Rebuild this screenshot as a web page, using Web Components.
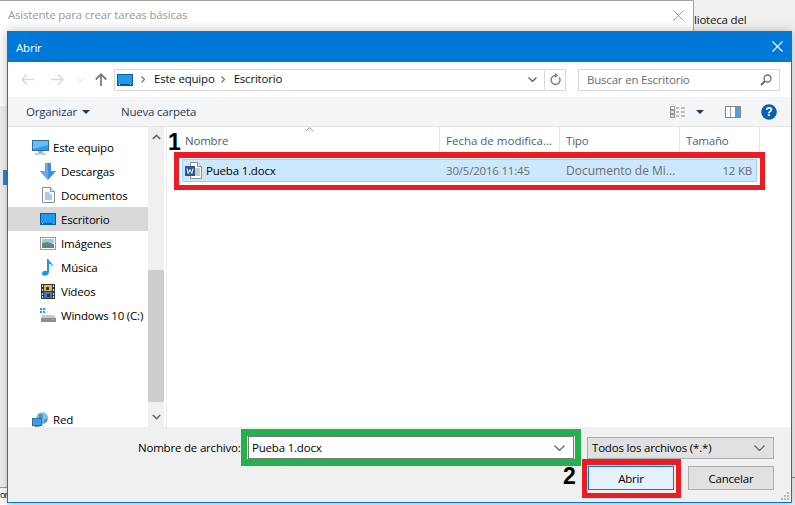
<!DOCTYPE html>
<html>
<head>
<meta charset="utf-8">
<title>Abrir</title>
<style>
  html, body { margin: 0; height: 100%; overflow: hidden; }
  body { background: #f0f0f0; font: 11.5px "Open Sans", "Noto Sans", sans-serif; letter-spacing: -.2px; color: #000; }
</style>
</head>
<body>
<desk-stage>
  <back-window></back-window>
  <file-dialog></file-dialog>
  <mark-box style="left:174px;top:152px;width:591px;height:38px;--c:#ed1c24"></mark-box>
  <mark-box style="left:241px;top:429px;width:340px;height:37px;--c:#22b14c;--w:7px 6px"></mark-box>
  <mark-box style="left:582px;top:459px;width:99px;height:39px;--c:#ed1c24"></mark-box>
  <mark-num style="left:168px;top:127px">1</mark-num>
  <mark-num style="left:563px;top:461px">2</mark-num>
</desk-stage>
<script>
const ICONS = {
  pc: `<svg width="17" height="15" viewBox="0 0 17 15"><rect x=".5" y=".5" width="16" height="10" fill="#2b9af3" stroke="#35708f"/><path d="M1 1h15v4L1 9z" fill="#66bdf8"/><rect x="6" y="11" width="5" height="2" fill="#9db4c0"/><rect x="3" y="13" width="11" height="2" fill="#c4d0d6"/></svg>`,
  down: `<svg width="16" height="17" viewBox="0 0 16 17"><path d="M5 0h6v8h5l-8 9-8-9h5z" fill="#3d8fdc"/><path d="M5 0h3v17L0 8h5z" fill="#62a9ea"/></svg>`,
  doc: `<svg width="13" height="16" viewBox="0 0 13 16"><path d="M.5.5h8l4 4v11H.5z" fill="#fff" stroke="#8f8f8f"/><path d="M8.5.5v4h4" fill="#ececec" stroke="#8f8f8f"/><path d="M3 6h4M3 8h7M3 10h7M3 12h7" stroke="#4a9ad8"/></svg>`,
  desk: `<svg width="16" height="12" viewBox="0 0 16 12"><rect x=".5" y=".5" width="15" height="11" fill="#1e9bf0" stroke="#0d5f99"/><rect x="1" y="10" width="14" height="1" fill="#0a4f85"/><rect x="2" y="10" width="1" height="1" fill="#fff"/><rect x="13" y="10" width="1" height="1" fill="#fff"/></svg>`,
  img: `<svg width="16" height="13" viewBox="0 0 16 13"><rect x=".5" y=".5" width="15" height="12" fill="#fff" stroke="#9a9a9a"/><rect x="2" y="2" width="12" height="4" fill="#9cc8e6"/><path d="M2 6l5-1 7 2v4H2z" fill="#5b8a72"/></svg>`,
  music: `<svg width="12" height="17" viewBox="0 0 12 17"><path d="M5 0h1.500c.4 3 5 4 4.500 8-.8-2-2.500-3-4-3.300V13c0 2.400-2 3.800-4.200 3.800C1 16.800 0 15.800 0 14.500 0 12.600 2.600 11.200 5 12z" fill="#1c97ea"/></svg>`,
  video: `<svg width="14" height="15" viewBox="0 0 14 15"><rect width="14" height="15" fill="#2e3640"/><rect x="3" y="1" width="8" height="6" fill="#e0b93c"/><rect x="3" y="8" width="8" height="6" fill="#3f78c0"/><path d="M5 3h3v3H5zM6 10h3v3H6z" fill="#333"/><path d="M1 1h1v2H1zM1 5h1v2H1zM1 9h1v2H1zM1 12h1v2H1zM12 1h1v2h-1zM12 5h1v2h-1zM12 9h1v2h-1zM12 12h1v2h-1z" fill="#ddd"/></svg>`,
  drive: `<svg width="16" height="14" viewBox="0 0 16 14"><path d="M0 0h2v2H0zM3 0h2v2H3zM0 3h2v2H0zM3 3h2v2H3z" fill="#1ba1e2"/><path d="M2 7h12l2 3v4H1v-4z" fill="#c9c9c9"/><rect x="1" y="10" width="15" height="4" fill="#8d8d8d"/><rect x="12" y="11" width="2" height="1" fill="#6fe06f"/></svg>`,
  net: `<svg width="17" height="15" viewBox="0 0 20 17"><circle cx="12" cy="7" r="7" fill="#7fc0e8"/><path d="M8 2c3-1 5 1 5 3s-3 3-5 2zM14 9l4-2c0 3-2 5-4 6z" fill="#4b8fb8"/><rect x=".5" y="7.500" width="11" height="8" fill="#3f9ee0" stroke="#1e5f8f"/><rect x="3" y="15" width="6" height="2" fill="#2a6f9f"/></svg>`
};
const CHEV_DOWN = `<svg width="11" height="6" viewBox="0 0 11 6"><path d="M.5.5l5 5 5-5" fill="none" stroke="#606060" stroke-width="1.200"/></svg>`;

function el(tag, css, html) {
  customElements.define(tag, class extends HTMLElement {
    constructor() {
      super();
      this.attachShadow({ mode: 'open' }).innerHTML = `<style>${css}</style>${html}`;
    }
  });
}

el('desk-stage', `:host { display: block; position: relative; width: 795px; height: 505px; overflow: hidden; }
  .tab { top: 170px; height: 15px; width: 4px; left: 3px; background: #2f86d0; position: absolute; }
  .dot { position: absolute; left: 5px; top: 43px; width: 2px; height: 2px; background: #e8a33d; }
  .low { position: absolute; left: 0; top: 487px; width: 7px; height: 18px; background: #fff; border-top: 1px solid #a0a0a0; box-sizing: border-box; font-size: 9px; letter-spacing: -1px; line-height: 13px; white-space: nowrap; }
  .lib { position: absolute; left: 694px; top: 12px; white-space: nowrap; color: #111; }
  .r { position: absolute; left: 792px; top: 477px; width: 3px; height: 1px; background: #888; }`,
  `<div class="lib">lioteca del</div><div class="tab"></div><div class="dot"></div><div class="low">or</div><div class="r"></div><slot></slot>`);

el('back-window', `:host { position: absolute; left: 0; top: 0; width: 694px; height: 106px; background: #fff; border-top: 1px solid #a3a3a3; border-right: 1px solid #a3a3a3; box-sizing: border-box; display: flex; justify-content: space-between; align-items: flex-start; padding: 6px 9px 0 8px; color: #9a9a9a; }
  svg { margin-top: 3px; }`,
  `<span>Asistente para crear tareas básicas</span><svg width="11" height="11" viewBox="0 0 11 11"><path d="M.5.500l10 10M10.500.500l-10 10" stroke="#9a9a9a" fill="none"/></svg>`);

el('file-dialog', `:host { position: absolute; left: 7px; top: 31px; width: 785px; height: 472px; box-sizing: border-box; border: 1px solid #0078d7; border-top: 0; background: #f0f0f0; display: flex; flex-direction: column; box-shadow: 0 0 10px rgba(0,0,0,.25); }
  .mid { display: flex; height: 300px; background: #fff; flex: none; }`,
  `<title-bar></title-bar><address-bar></address-bar><tool-bar></tool-bar>
   <div class="mid"><nav-pane></nav-pane><file-list></file-list></div>
   <open-footer></open-footer>`);

el('title-bar', `:host { display: flex; flex: none; height: 31px; background: #0078d7; color: #fff; align-items: center; justify-content: space-between; padding: 0 8px; }
  span { padding-top: 2px; }
  svg { display: block; }`,
  `<span>Abrir</span><svg width="11" height="11" viewBox="0 0 11 11"><path d="M.5.500l10 10M10.500.500l-10 10" stroke="#fff" stroke-width="1.100" fill="none"/></svg>`);

el('address-bar', `:host { display: flex; flex: none; height: 35px; background: #fff; align-items: center; box-sizing: border-box; padding: 0 11px 0 13px; }
  svg { display: block; flex: none; }
  .nav { display: flex; align-items: center; width: 93px; flex: none; }
  .box { height: 22px; box-sizing: border-box; border: 1px solid #d9d9d9; display: flex; align-items: center; background: #fff; flex: none; }
  .path { width: 452px; padding-left: 2px; }
  .path span { color: #111; margin-top: -2px; }
  .sep { margin: 0 9px 0 8px; }
  .sep2 { margin: 0 9px 0 6px; }
  .ctl { margin-left: auto; display: flex; align-items: center; height: 100%; }
  .rf { width: 20px; height: 100%; border-left: 1px solid #d9d9d9; display: flex; align-items: center; justify-content: center; margin-left: 7px; }
  .find { width: 202px; margin-left: 12px; padding: 0 7px 0 8px; justify-content: space-between; color: #6d6d6d; }`,
  `<div class="nav">
     <svg width="13" height="11" viewBox="0 0 13 11" style="margin-right:17px"><path d="M6 .5L1 5.500l5 5M1 5.500h12" fill="none" stroke="#d8d8d8" stroke-width="1.500"/></svg>
     <svg width="13" height="11" viewBox="0 0 13 11" style="margin-right:13px"><path d="M7 .5l5 5-5 5M12 5.500H0" fill="none" stroke="#d8d8d8" stroke-width="1.500"/></svg>
     <svg width="7" height="4" viewBox="0 0 7 4" style="margin-right:11px"><path d="M.5.500l3 3 3-3" fill="none" stroke="#d8d8d8"/></svg>
     <svg width="12" height="13" viewBox="0 0 12 13"><path d="M6 13V1.500M.8 6.500L6 1.200l5.200 5.300" fill="none" stroke="#7a7a7a" stroke-width="1.800"/></svg>
   </div>
   <div class="box path">
     ${ICONS.desk}
     <svg class="sep" width="4" height="7" viewBox="0 0 4 7"><path d="M.5.500l3 3-3 3" fill="none" stroke="#707070" stroke-width="1.200"/></svg>
     <span>Este equipo</span>
     <svg class="sep2" width="4" height="7" viewBox="0 0 4 7"><path d="M.5.500l3 3-3 3" fill="none" stroke="#707070" stroke-width="1.200"/></svg>
     <span>Escritorio</span>
     <div class="ctl">
       <svg width="9" height="5" viewBox="0 0 9 5"><path d="M.5.500l4 4 4-4" fill="none" stroke="#606060" stroke-width="1.300"/></svg>
       <div class="rf"><svg width="11" height="13" viewBox="0 0 11 13"><path d="M9.300 4.500A4.500 4.500 0 1 1 5.500 2.500" fill="none" stroke="#7a7a7a" stroke-width="1.400"/><path d="M5 0l3 2.500L5 5z" fill="#7a7a7a"/></svg></div>
     </div>
   </div>
   <div class="box find"><span>Buscar en Escritorio</span>
     <svg width="12" height="12" viewBox="0 0 12 12"><circle cx="7.500" cy="4.500" r="3.500" fill="none" stroke="#6f6f6f" stroke-width="1.300"/><path d="M5 7L1 11" stroke="#6f6f6f" stroke-width="2"/></svg>
   </div>`);

el('tool-bar', `:host { display: flex; flex: none; height: 30px; background: #f4f5f7; border-bottom: 1px solid #e4e4e4; box-sizing: border-box; align-items: center; padding: 0 14px 0 18px; color: #1e3a5c; }
  svg { display: block; flex: none; }
  .org { display: flex; align-items: center; gap: 5px; margin-right: 31px; }
  .right { margin-left: auto; display: flex; align-items: center; }`,
  `<div class="org">Organizar <svg width="8" height="4" viewBox="0 0 8 4"><path d="M0 0h8L4 4z" fill="#1e3a5c"/></svg></div>
   <span>Nueva carpeta</span>
   <div class="right">
     <svg width="16" height="12" viewBox="0 0 16 12" style="margin-right:10px"><rect x=".5" y=".5" width="4" height="3" fill="#fff" stroke="#9a9a9a"/><rect x=".5" y="4.500" width="4" height="3" fill="#cfe4f7" stroke="#9a9a9a"/><rect x=".5" y="8.500" width="4" height="3" fill="#f3c9c9" stroke="#9a9a9a"/><path d="M6 2h3M11 2h4M6 6h3M11 6h4M6 10h3M11 10h4" stroke="#8a8a8a"/></svg>
     <svg width="8" height="4" viewBox="0 0 8 4" style="margin-right:21px"><path d="M0 0h8L4 4z" fill="#1e3a5c"/></svg>
     <svg width="16" height="12" viewBox="0 0 16 12" style="margin-right:20px"><rect x=".5" y=".5" width="15" height="11" fill="#fff" stroke="#8a8a8a"/><rect x="10" y="1" width="5" height="10" fill="#4d9fe0"/><path d="M5.500 1v10" stroke="#9a9a9a"/></svg>
     <svg width="16" height="16" viewBox="0 0 17 17"><circle cx="8.500" cy="8.500" r="8.300" fill="#0b5fb0"/><text x="8.500" y="13.200" text-anchor="middle" font-family="Liberation Sans" font-weight="700" font-size="13" fill="#fff">?</text></svg>
   </div>`);

el('nav-pane', `:host { display: flex; flex: none; width: 158px; }
  .items { width: 140px; flex: none; display: flex; flex-direction: column; padding-top: 8px; box-sizing: border-box; }
  .bar { width: 16px; flex: none; background: #f0f0f0; display: flex; flex-direction: column; align-items: center; }
  .bar svg { display: block; flex: none; margin: 7px 0; }
  .track { flex: 1; width: 100%; padding-top: 123px; box-sizing: border-box; }
  .thumb { background: #cdcdcd; height: 132px; }
  .net { margin-top: auto; margin-bottom: -4px; }
  .edge { width: 2px; flex: none; background: #fff; }`,
  `<div class="items">
     <nav-item top><span slot="i">${ICONS.pc}</span>Este equipo</nav-item>
     <nav-item><span slot="i">${ICONS.down}</span>Descargas</nav-item>
     <nav-item><span slot="i">${ICONS.doc}</span>Documentos</nav-item>
     <nav-item sel><span slot="i">${ICONS.desk}</span>Escritorio</nav-item>
     <nav-item><span slot="i">${ICONS.img}</span>Imágenes</nav-item>
     <nav-item><span slot="i">${ICONS.music}</span>Música</nav-item>
     <nav-item><span slot="i">${ICONS.video}</span>Vídeos</nav-item>
     <nav-item><span slot="i">${ICONS.drive}</span>Windows 10 (C:)</nav-item>
     <nav-item top class="net"><span slot="i">${ICONS.net}</span>Red</nav-item>
   </div>
   <div class="bar">
     <svg width="9" height="6" viewBox="0 0 9 6"><path d="M.8 5L4.500 1.300 8.200 5" fill="none" stroke="#606060" stroke-width="1.600"/></svg>
     <div class="track"><div class="thumb"></div></div>
     <svg width="9" height="6" viewBox="0 0 9 6"><path d="M.8 1l3.700 3.700L8.200 1" fill="none" stroke="#606060" stroke-width="1.600"/></svg>
   </div>
   <div class="edge"></div>`);

el('nav-item', `:host { display: flex; height: 24px; flex: none; align-items: center; padding-left: 32px; white-space: nowrap; }
  :host([top]) { padding-left: 24px; }
  :host([sel]) { background: #d9d9d9; }
  .i { width: 16px; display: flex; align-items: center; justify-content: center; flex: none; margin-right: 5px; height: 18px; }
  :host([top]) .i { width: 21px; margin-right: 0; justify-content: flex-start; }
  ::slotted(span) { display: flex; }`,
  `<div class="i"><slot name="i"></slot></div><slot></slot>`);

el('file-list', `:host { display: block; flex: 1; background: #fff; border-left: 1px solid #ececec; box-sizing: border-box; position: relative; }
  .head { display: grid; grid-template-columns: 273px 120px 120px 80px; height: 27px; align-items: center; color: #4c607a; }
  .head div { height: 100%; display: flex; align-items: center; padding-left: 6px; box-sizing: border-box; border-right: 1px solid #e5e5e5; }
  .head div:first-child { padding-left: 18px; }
  .wide { letter-spacing: 0; }
  .sort { position: absolute; left: 138px; top: 0; }
  .row { display: grid; grid-template-columns: 258px 120px 120px 75px; box-sizing: border-box; margin: 5px 0 0 15px; width: 575px; height: 23px; background: #cce8ff; border: 1px solid #99d1ff; align-items: center; color: #6d6d6d; }
  .name { display: flex; align-items: center; color: #000; padding-left: 2px; gap: 4px; }
  .date, .kind { padding-left: 5px; white-space: nowrap; }
  .kind { font-size: 12px; letter-spacing: 0; }
  .size { text-align: right; padding-right: 4px; }
  svg { display: block; flex: none; }`,
  `<div class="head"><div>Nombre</div><div class="wide">Fecha de modifica...</div><div>Tipo</div><div>Tamaño</div></div>
   <svg class="sort" width="9" height="5" viewBox="0 0 9 5"><path d="M.5 4.500l4-4 4 4" fill="none" stroke="#9a9a9a"/></svg>
   <div class="row">
     <div class="name">
       <svg width="17" height="17" viewBox="0 0 17 17"><path d="M5.500.5h7l4 4v12h-11z" fill="#fff" stroke="#8f8f8f"/><path d="M12.500.5v4h4" fill="#e6e6e6" stroke="#8f8f8f"/><path d="M10 7h5M10 9h5M10 11h5M10 13h5" stroke="#9a9a9a"/><rect y="4" width="10" height="10" fill="#2b579a"/><path d="M2 6.500l1.200 5 1.800-4 1.800 4 1.200-5" fill="none" stroke="#fff"/></svg>
       <span>Pueba 1.docx</span>
     </div>
     <div class="date">30/5/2016 11:45</div><div class="kind">Documento de Mi...</div><div class="size">12 KB</div>
   </div>`);

el('open-footer', `:host { display: block; flex: 1; background: #f0f0f0; position: relative; box-sizing: border-box; padding: 9px 17px 0 130px; }
  .r1, .r2 { display: flex; align-items: center; }
  .r1 { height: 23px; }
  .lab { width: 110px; flex: none; white-space: nowrap; }
  .in { width: 326px; height: 23px; box-sizing: border-box; border: 1px solid #7a7a7a; background: #fff; display: flex; align-items: center; justify-content: space-between; padding: 0 8px 0 3px; }
  .sel { width: 187px; height: 22px; box-sizing: border-box; border: 1px solid #adadad; background: #e1e1e1; margin-left: 13px; display: flex; align-items: center; justify-content: space-between; padding: 0 8px 0 4px; }
  .r2 { justify-content: flex-end; gap: 14px; margin-top: 7px; }
  .btn { width: 86px; height: 24px; box-sizing: border-box; border: 1px solid #adadad; background: #e1e1e1; display: flex; align-items: center; justify-content: center; }
  .btn.on { border: 1px solid #0078d7; background: #e5f1fb; }
  .grip { position: absolute; right: 2px; bottom: 2px; display: block; }`,
  `<div class="r1"><div class="lab">Nombre de archivo:</div>
     <div class="in"><span>Pueba 1.docx</span>${CHEV_DOWN}</div>
     <div class="sel"><span>Todos los archivos (*.*)</span>${CHEV_DOWN}</div>
   </div>
   <div class="r2"><div class="btn on">Abrir</div><div class="btn">Cancelar</div></div>
   <svg class="grip" width="8" height="8" viewBox="0 0 8 8"><path d="M6 0h2v2H6zM3 3h2v2H3zM6 3h2v2H6zM0 6h2v2H0zM3 6h2v2H3zM6 6h2v2H6z" fill="#b8b8b8"/></svg>`);

el('mark-box', `:host { position: absolute; box-sizing: border-box; border: solid var(--c); border-width: var(--w, 6px 5px 5px); }`, ``);
el('mark-num', `:host { position: absolute; font: 700 23px/30px "Liberation Sans", sans-serif; letter-spacing: 0; color: #000; }`, `<slot></slot>`);
</script>
</body>
</html>
